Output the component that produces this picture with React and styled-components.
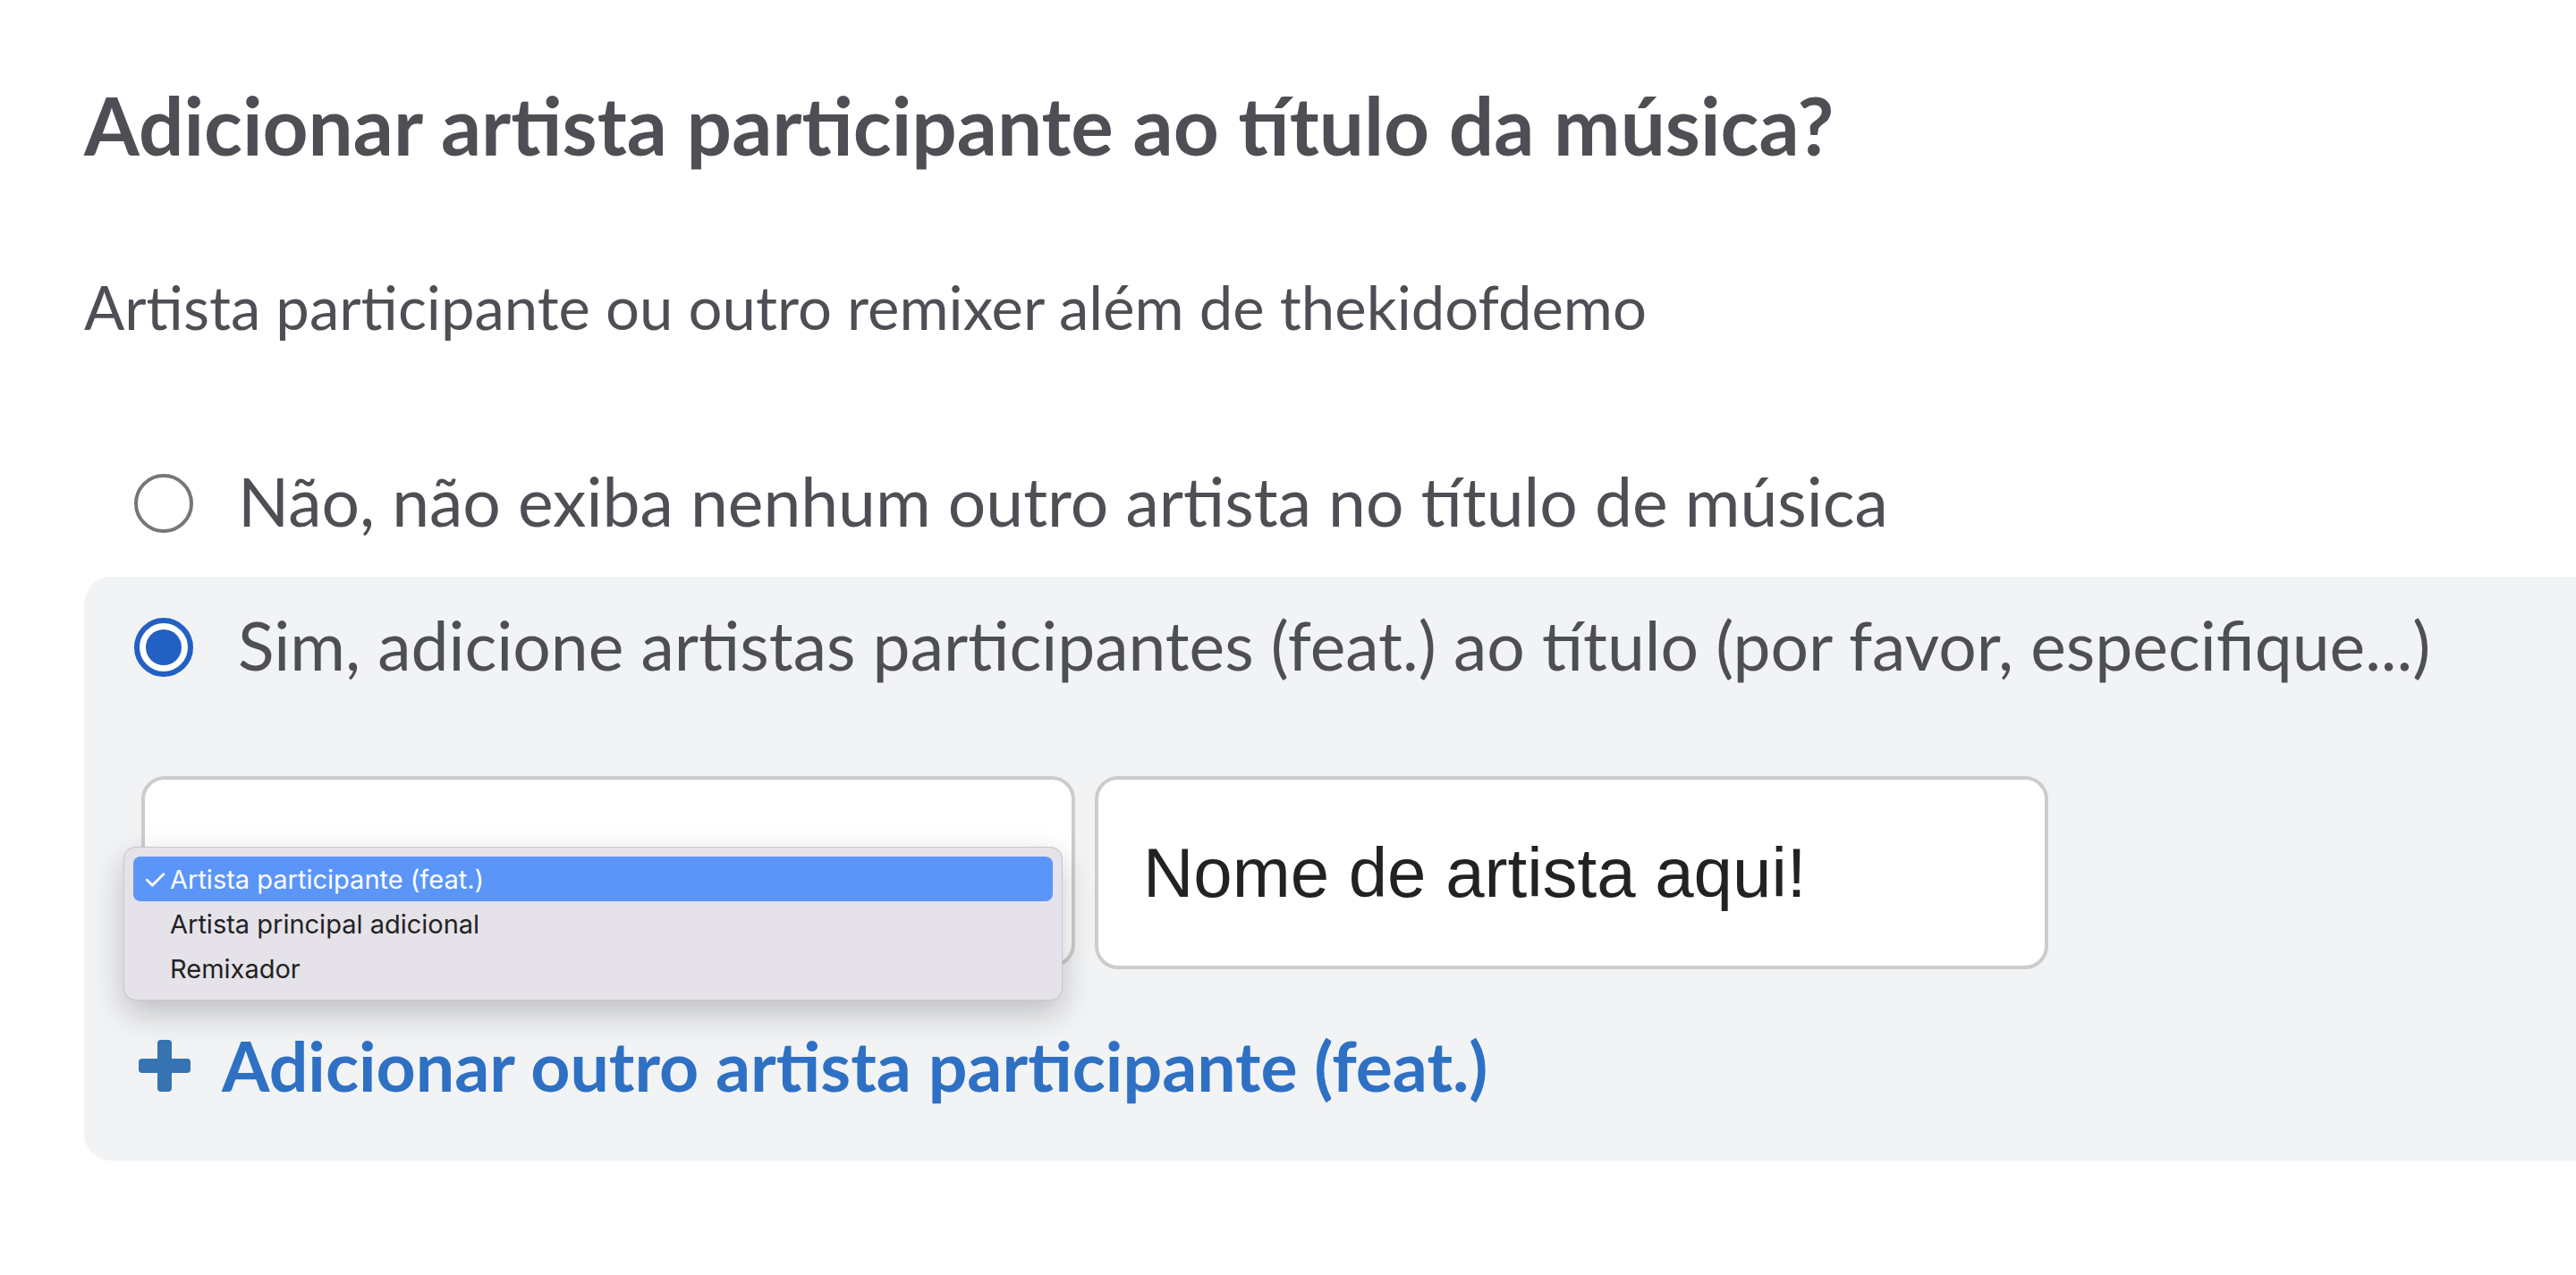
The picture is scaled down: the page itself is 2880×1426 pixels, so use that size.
import React from "react";
import styled, { createGlobalStyle } from "styled-components";

const GlobalStyle = createGlobalStyle`
  html, body {
    margin: 0;
    padding: 0;
    background: #ffffff;
    overflow: hidden;
  }
  body {
    font-family: Lato, "Open Sans", sans-serif;
    color: #4e4f55;
  }
`;

const Page = styled.div`
  width: 2880px;
  min-height: 1426px;
  padding: 87px 0 0 94px;
  box-sizing: border-box;
`;

const Title = styled.h2`
  margin: 0;
  font-size: 89px;
  line-height: 1.2;
  font-weight: 700;
  color: #4e4f55;
  white-space: nowrap;
`;

const Hint = styled.p`
  margin: 109px 0 0;
  font-size: 67px;
  line-height: 1.2;
  font-weight: 400;
  white-space: nowrap;
`;

const Options = styled.div`
  margin-top: 132px;
  display: flex;
  flex-direction: column;
  gap: 40px;
`;

const OptionRow = styled.label`
  display: flex;
  align-items: center;
  gap: 50px;
  padding-left: 56px;
  font-size: 75px;
  line-height: 1.2;
  white-space: nowrap;
`;

const Radio = styled.span`
  flex: none;
  width: 66px;
  height: 66px;
  box-sizing: border-box;
  border-radius: 50%;
  background: #ffffff;
  border: ${(p) => (p.$checked ? "6px solid #2360c4" : "4px solid #767676")};
  display: flex;
  align-items: center;
  justify-content: center;
  margin-top: 6px;

  &::after {
    content: "";
    display: ${(p) => (p.$checked ? "block" : "none")};
    width: 40px;
    height: 40px;
    border-radius: 50%;
    background: #2360c4;
  }
`;

const Panel = styled.div`
  background: #f2f3f5;
  border-radius: 30px 0 0 30px;
  padding: 31px 0 60px;
`;

const FieldRow = styled.div`
  display: flex;
  gap: 22px;
  margin: 102px 0 0 64px;
`;

const SelectWrap = styled.div`
  position: relative;
  width: 1044px;
`;

const SelectBox = styled.div`
  height: 214px;
  box-sizing: border-box;
  background: #ffffff;
  border: 4px solid #cccccc;
  border-radius: 26px;
`;

const Menu = styled.ul`
  position: absolute;
  left: -20px;
  top: 79px;
  width: 1050px;
  box-sizing: border-box;
  margin: 0;
  padding: 10px;
  list-style: none;
  background: #e5e2e9;
  border: 1px solid rgba(0, 0, 0, 0.12);
  border-radius: 14px;
  box-shadow: 0 14px 36px rgba(0, 0, 0, 0.22);
  font-family: Inter, "Liberation Sans", sans-serif;
  font-size: 29px;
`;

const MenuItem = styled.li`
  height: 50px;
  display: flex;
  align-items: center;
  padding-left: 10px;
  border-radius: 8px;
  background: ${(p) => (p.$active ? "#5b95f8" : "transparent")};
  color: ${(p) => (p.$active ? "#ffffff" : "#222222")};
`;

const Check = styled.span`
  width: 31px;
  flex: none;
  font-size: 32px;
`;

const NameInput = styled.input`
  width: 1066px;
  height: 216px;
  box-sizing: border-box;
  background: #ffffff;
  border: 4px solid #cccccc;
  border-radius: 26px;
  padding: 0 0 0 50px;
  font-family: "Liberation Sans", Arial, sans-serif;
  font-size: 78px;
  color: #222222;
  outline: none;
`;

const AddLink = styled.a`
  display: inline-flex;
  align-items: center;
  gap: 35px;
  margin: 61px 0 0 61px;
  font-size: 77px;
  line-height: 1.2;
  font-weight: 700;
  color: #2e70c4;
  text-decoration: none;
  white-space: nowrap;
`;

const PlusIcon = () => (
  <svg width="58" height="58" viewBox="0 0 58 58" style={{ marginTop: 2 }}>
    <rect x="21" y="0" width="16" height="58" rx="4" fill="#3574b0" />
    <rect x="0" y="21" width="58" height="16" rx="4" fill="#3574b0" />
  </svg>
);

const items = [
  "Artista participante (feat.)",
  "Artista principal adicional",
  "Remixador",
];

export default function App() {
  return (
    <>
      <GlobalStyle />
      <Page>
        <Title>Adicionar artista participante ao título da música?</Title>
        <Hint>Artista participante ou outro remixer além de thekidofdemo</Hint>

        <Options>
          <OptionRow>
            <Radio />
            Não, não exiba nenhum outro artista no título de música
          </OptionRow>

          <Panel>
            <OptionRow>
              <Radio $checked />
              Sim, adicione artistas participantes (feat.) ao título (por favor,
              especifique...)
            </OptionRow>

            <FieldRow>
              <SelectWrap>
                <SelectBox />
                <Menu>
                  {items.map((item, i) => (
                    <MenuItem key={item} $active={i === 0}>
                      <Check>{i === 0 ? "✓" : ""}</Check>
                      {item}
                    </MenuItem>
                  ))}
                </Menu>
              </SelectWrap>
              <NameInput readOnly value="Nome de artista aqui!" />
            </FieldRow>

            <AddLink href="#">
              <PlusIcon />
              Adicionar outro artista participante (feat.)
            </AddLink>
          </Panel>
        </Options>
      </Page>
    </>
  );
}
